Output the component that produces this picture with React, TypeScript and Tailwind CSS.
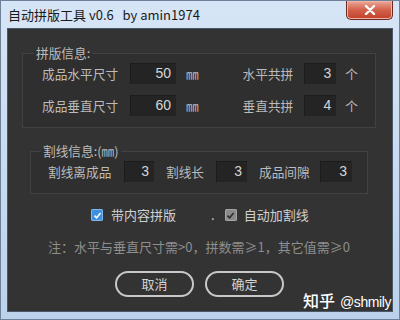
import React from "react";

function NumBox({ value, className }: { value: string; className: string }) {
  return (
    <span
      className={`flex h-[21px] shrink-0 items-center justify-end bg-[#242424] pr-[5px] text-[14px] text-[#d6d6d6] shadow-[inset_1px_1px_0_#1c1c1c] font-['Liberation_Sans',sans-serif] ${className}`}
    >
      {value}
    </span>
  );
}

function Check({ on }: { on: boolean }) {
  return (
    <span
      className={`flex h-[12px] w-[12px] shrink-0 items-center justify-center rounded-[2px] ${
        on ? "bg-[#3d8fe0] shadow-[inset_0_0_0_1px_#7fb7ee]" : "bg-[#8a8a8a] shadow-[inset_0_0_0_1px_#a5a5a5]"
      }`}
    >
      <svg width="9" height="9" viewBox="0 0 9 9">
        <path
          d="M1.5 4.6 L3.6 6.8 L7.6 2"
          fill="none"
          stroke={on ? "#ffffff" : "#2e2e2e"}
          strokeWidth="1.6"
        />
      </svg>
    </span>
  );
}

export default function App() {
  return (
    <div className="relative h-[320px] w-[400px] overflow-hidden border border-[#6d8199] bg-gradient-to-b from-[#d6e5f6] to-[#bcd2ec] px-[6px] pb-[7px] font-['Noto_Sans_CJK_SC','Noto_Sans',sans-serif]">
      {/* Title bar */}
      <div className="flex h-[27px] items-center">
        <span className="ml-[1px] whitespace-pre text-[13px] text-[#1a1a1a]">
          自动拼版工具 v0.6   by amin1974
        </span>
        <div className="ml-auto -mt-[8px] flex h-[19px] w-[47px] items-center justify-center rounded-b-[5px] border border-t-0 border-[#6b2b22] bg-gradient-to-b from-[#eaa99b] via-[#d2604a] to-[#c0402a] shadow-[inset_0_0_0_1px_#f0b4a6]">
          <svg width="12" height="10" viewBox="0 0 12 10">
            <path d="M2 1 L10 9 M10 1 L2 9" stroke="#ffffff" strokeWidth="2.4" strokeLinecap="round" />
          </svg>
        </div>
      </div>

      {/* Content */}
      <div className="flex h-[284px] flex-col whitespace-nowrap border border-[#4a5868] bg-[#333333] text-[12.7px] text-[#bcbcbc]">
        <fieldset className="ml-[14px] mr-[16px] mt-[16px] border border-[#424242] bg-[#2f2f2f] pb-[11px]">
          <legend className="ml-[11px] px-[2px] leading-[16px]">拼版信息:</legend>
          <div className="mt-[2px] flex h-[21px] items-center">
            <span className="ml-[19px] w-[76px] shrink-0">成品水平尺寸</span>
            <NumBox value="50" className="ml-[12px] w-[46px]" />
            <span className="ml-[10px]">㎜</span>
            <span className="ml-auto">水平共拼</span>
            <NumBox value="3" className="ml-[11px] w-[32px]" />
            <span className="ml-[9px] mr-[17px]">个</span>
          </div>
          <div className="mt-[11px] flex h-[21px] items-center">
            <span className="ml-[19px] w-[76px] shrink-0">成品垂直尺寸</span>
            <NumBox value="60" className="ml-[12px] w-[46px]" />
            <span className="ml-[10px]">㎜</span>
            <span className="ml-auto">垂直共拼</span>
            <NumBox value="4" className="ml-[11px] w-[32px]" />
            <span className="ml-[9px] mr-[17px]">个</span>
          </div>
        </fieldset>

        <fieldset className="ml-[22px] mr-[24px] mt-[15px] border border-[#424242] bg-[#2f2f2f] pb-[11px]">
          <legend className="ml-[10px] px-[2px] leading-[16px]">割线信息:(㎜)</legend>
          <div className="mt-[2px] flex h-[21px] items-center">
            <span className="ml-[17px] w-[64px] shrink-0">割线离成品</span>
            <NumBox value="3" className="ml-[12px] w-[30px]" />
            <span className="ml-[12px] w-[39px] shrink-0">割线长</span>
            <NumBox value="3" className="ml-[11px] w-[31px]" />
            <span className="ml-[12px] w-[52px] shrink-0">成品间隙</span>
            <NumBox value="3" className="ml-[9px] w-[32px]" />
          </div>
        </fieldset>

        <div className="mt-[13px] flex h-[16px] items-center text-[13px] leading-[16px] text-[#d0d0d0]">
          <span className="ml-[83px]">
            <Check on />
          </span>
          <span className="ml-[8px]">带内容拼版</span>
          <span className="ml-[35px]">.</span>
          <span className="ml-[10px]">
            <Check on={false} />
          </span>
          <span className="ml-[7px]">自动加割线</span>
        </div>

        <div className="ml-[40px] mt-[16px] h-[16px] text-[13px] leading-[16px] text-[#8e8e8e]">
          注：水平与垂直尺寸需&gt;0，拼数需≥1，其它值需≥0
        </div>

        <div className="mt-[16px] flex">
          <button className="ml-[107px] flex h-[26px] w-[79px] items-center justify-center rounded-full border-2 border-[#c8c8c8] text-[13px] text-[#d4d4d4]">
            取消
          </button>
          <button className="ml-[11px] flex h-[26px] w-[79px] items-center justify-center rounded-full border-2 border-[#c8c8c8] text-[13px] text-[#d4d4d4]">
            确定
          </button>
        </div>
      </div>

      {/* Watermark */}
      <span className="absolute left-[302px] top-[289px] flex items-baseline whitespace-nowrap leading-[20px] text-white">
        <span className="text-[16px] font-medium">知乎</span>
        <span className="ml-[5px] text-[14px] font-medium tracking-[-0.4px] font-['Liberation_Sans',sans-serif]">@shmily</span>
      </span>
    </div>
  );
}
